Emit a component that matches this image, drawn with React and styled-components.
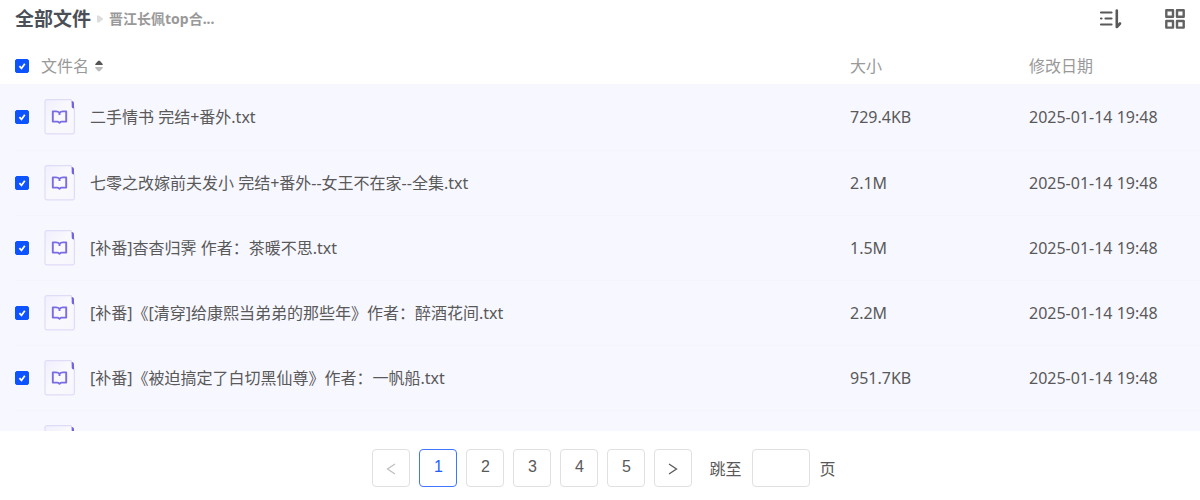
import React, { useState } from 'react';
import styled, { createGlobalStyle } from 'styled-components';

const initialFiles = [
  { id: 1, name: '二手情书 完结+番外.txt', size: '729.4KB', date: '2025-01-14 19:48' },
  { id: 2, name: '七零之改嫁前夫发小 完结+番外--女王不在家--全集.txt', size: '2.1M', date: '2025-01-14 19:48' },
  { id: 3, name: '[补番]杳杳归霁 作者：茶暖不思.txt', size: '1.5M', date: '2025-01-14 19:48' },
  { id: 4, name: '[补番]《[清穿]给康熙当弟弟的那些年》作者：醉酒花间.txt', size: '2.2M', date: '2025-01-14 19:48' },
  { id: 5, name: '[补番]《被迫搞定了白切黑仙尊》作者：一帆船.txt', size: '951.7KB', date: '2025-01-14 19:48' },
  { id: 6, name: '', size: '', date: '' },
];

const pages = [1, 2, 3, 4, 5];

const Checkbox = ({ label, checked, onChange }) => (
  <CheckboxLabel>
    <CheckboxInput type="checkbox" aria-label={label} checked={checked} onChange={onChange} />
    {checked && (
      <CheckMark viewBox="0 0 14 14" aria-hidden="true">
        <path d="M4.4 7.2 6.5 9.4 9.8 4.8" />
      </CheckMark>
    )}
  </CheckboxLabel>
);

const BookFileIcon = () => (
  <FileSvg viewBox="0 0 32 36" aria-hidden="true">
    <defs>
      <linearGradient id="filePaper" x1="0" y1="0" x2="1" y2="1">
        <stop offset="0" stopColor="#f0effe" />
        <stop offset="0.5" stopColor="#f9f9fd" />
        <stop offset="1" stopColor="#f7f6fc" />
      </linearGradient>
    </defs>
    <path d="M2.8.6H27l3.400 9v23.400a1.800 1.800 0 0 1-1.800 1.800H2.800A1.800 1.800 0 0 1 1 33V2.400A1.800 1.800 0 0 1 2.800.6Z" fill="url(#filePaper)" stroke="#dfdcf8" strokeWidth="1.200" />
    <path d="M27.700 2C29.300 2.200 30 3 30 4.500V9.500C28.500 9.500 27.700 8.800 27.700 7.500Z" fill="#7163e0" />
    <path d="M15.500 13.800C14.600 12.700 13.300 12.400 12 12.400H8.800v10.200h4.500c.9 0 1.500.5 2.200 1.200.7-.7 1.300-1.200 2.200-1.200h4.500V12.400H19c-1.300 0-2.600.3-3.500 1.400v2.200" fill="none" stroke="#7a6de4" strokeWidth="1.900" strokeLinejoin="round" />
  </FileSvg>
);

const App = () => {
  const [selected, setSelected] = useState(initialFiles.map((file) => file.id));
  const [page, setPage] = useState(1);
  const allSelected = selected.length === initialFiles.length;

  const toggleAll = () => setSelected(allSelected ? [] : initialFiles.map((file) => file.id));
  const toggleFile = (id) => {
    setSelected(selected.includes(id) ? selected.filter((item) => item !== id) : [...selected, id]);
  };

  return (
    <Page>
      <GlobalStyle />
      <TopBar>
        <Breadcrumb aria-label="路径">
          <RootLink href="#all">全部文件</RootLink>
          <CrumbArrow viewBox="0 0 6 8" aria-hidden="true"><path d="M0 0.500H2L6 3.500V4.500L2 7.500H0Z" /></CrumbArrow>
          <FolderLink href="#folder">晋江长佩top合...</FolderLink>
        </Breadcrumb>
        <Tools>
          <ToolButton type="button" aria-label="排序">
            <svg width="24" height="20" viewBox="0 0 24 20" fill="none" stroke="#595959" strokeWidth="2.200" strokeLinecap="round">
              <path d="M2 3.500H12.500M2 9.500H2.500M6.500 9.500H12.500M2 15.500H12.500" />
              <path d="M17.800 1.500V18L21 14.500" strokeWidth="2.600" strokeLinejoin="round" />
            </svg>
          </ToolButton>
          <ToolButton type="button" aria-label="网格视图">
            <svg width="20" height="20" viewBox="0 0 20 20" fill="none" stroke="#626262" strokeWidth="2.400" strokeLinejoin="round">
              <path d="M1.300 1.200h6.700v6.600H1.300zM12 1.200h6.700v6.600H12zM1.300 12h6.700v6.600H1.300zM12 12h6.700v6.600H12z" />
            </svg>
          </ToolButton>
        </Tools>
      </TopBar>

      <ListPane>
        <FileTable>
          <thead>
            <tr>
              <HeadCell $width="41px" $first>
                <Checkbox label="全选" checked={allSelected} onChange={toggleAll} />
              </HeadCell>
              <HeadCell>
                <SortButton type="button">
                  文件名
                  <svg width="8" height="12" viewBox="0 0 8 12" aria-hidden="true">
                    <path d="M0.300 5V4L3.200.8h1.600L7.700 4v1Z" fill="#555" />
                    <path d="M0.300 7v1l2.900 3.200h1.600L7.700 8V7Z" fill="#bbb" />
                  </svg>
                </SortButton>
              </HeadCell>
              <HeadCell $width="179px">大小</HeadCell>
              <HeadCell $width="171px">修改日期</HeadCell>
            </tr>
          </thead>
          <tbody>
            {initialFiles.map((file) => (
              <FileRow key={file.id}>
                <Cell $first>
                  <Checkbox
                    label={`选择 ${file.name}`}
                    checked={selected.includes(file.id)}
                    onChange={() => toggleFile(file.id)}
                  />
                </Cell>
                <Cell>
                  <FileName>
                    <BookFileIcon />
                    <span>{file.name}</span>
                  </FileName>
                </Cell>
                <Cell>{file.size}</Cell>
                <Cell>{file.date}</Cell>
              </FileRow>
            ))}
          </tbody>
        </FileTable>
      </ListPane>

      <Pagination aria-label="分页">
        <PageButtons>
          <PageButton type="button" aria-label="上一页" disabled={page === 1} onClick={() => setPage(page - 1)}>
            <Chevron viewBox="0 0 10 12"><path d="M9 1 1.500 6 9 11" /></Chevron>
          </PageButton>
          {pages.map((number) => (
            <PageButton type="button" key={number} $active={number === page} onClick={() => setPage(number)}>
              {number}
            </PageButton>
          ))}
          <PageButton type="button" aria-label="下一页" disabled={page === 5} onClick={() => setPage(page + 1)}>
            <Chevron viewBox="0 0 10 12"><path d="M1 1 8.500 6 1 11" /></Chevron>
          </PageButton>
        </PageButtons>
        <JumpLabel>
          <span>跳至</span>
          <JumpInput type="text" />
          <span>页</span>
        </JumpLabel>
      </Pagination>
    </Page>
  );
};

const GlobalStyle = createGlobalStyle`
  * {
    box-sizing: border-box;
  }

  body {
    margin: 0;
    background: #fff;
    color: #595959;
    font-family: 'Noto Sans', 'Noto Sans CJK SC', sans-serif;
    font-size: 16px;
    line-height: 24px;
  }

  button,
  input {
    font: inherit;
    color: inherit;
  }
`;

const Page = styled('div')`
  display: flex;
  flex-direction: column;
  height: 100vh;
`;

const TopBar = styled('header')`
  display: flex;
  align-items: center;
  justify-content: space-between;
  padding: 7px 15px 13px;
`;

const Breadcrumb = styled('nav')`
  display: flex;
  align-items: center;
  gap: 6px;
  font-weight: 700;

  a {
    text-decoration: none;
  }
`;

const RootLink = styled('a')`
  color: #4b4f57;
  font-size: 19px;
`;

const CrumbArrow = styled('svg')`
  width: 6px;
  height: 8px;
  fill: #ddd;
`;

const FolderLink = styled('a')`
  color: #999;
  font-size: 14px;
`;

const Tools = styled('div')`
  display: flex;
  gap: 42px;
`;

const ToolButton = styled('button')`
  display: flex;
  padding: 0;
  border: 0;
  background: none;
  cursor: pointer;
`;

const ListPane = styled('main')`
  flex: 1;
  min-height: 0;
  overflow-y: auto;
  scrollbar-width: none;
`;

const FileTable = styled('table')`
  width: 100%;
  border-spacing: 0;
  table-layout: fixed;
`;

const HeadCell = styled('th')`
  position: sticky;
  top: 0;
  z-index: 1;
  width: ${({ $width }) => $width || 'auto'};
  height: 40px;
  padding: 4px 0 0 ${({ $first }) => ($first ? '15px' : '0')};
  background: #fff;
  color: #999;
  font-weight: 400;
  text-align: left;
`;

const SortButton = styled('button')`
  display: flex;
  align-items: center;
  gap: 6px;
  padding: 0;
  border: 0;
  background: none;
  cursor: pointer;
`;

const Cell = styled('td')`
  height: 65px;
  padding: 0 0 0 ${({ $first }) => ($first ? '15px' : '0')};
`;

const FileRow = styled('tr')`
  background: #f7f7ff;

  &:first-child ${Cell} {
    height: 66px;
  }

  & + & ${Cell} {
    background: linear-gradient(#f4f4fa, #f4f4fa) 0 0 / 100% 1px no-repeat;
  }

  & + & ${Cell}:first-child {
    background-position: 15px 0;
  }
`;

const FileName = styled('div')`
  display: flex;
  align-items: center;
  gap: 14px;
  padding-left: 3px;
  white-space: nowrap;
`;

const FileSvg = styled('svg')`
  flex: none;
  width: 32px;
  height: 36px;
`;

const CheckboxLabel = styled('label')`
  display: grid;
  width: 14px;
  height: 14px;
`;

const CheckboxInput = styled('input')`
  grid-area: 1 / 1;
  appearance: none;
  width: 14px;
  height: 14px;
  margin: 0;
  border: 1px solid #c9ccd4;
  border-radius: 2px;
  background: #fff;
  cursor: pointer;

  &:checked {
    border-color: #0d53ff;
    background: #0d53ff;
  }
`;

const CheckMark = styled('svg')`
  grid-area: 1 / 1;
  z-index: 0;
  fill: none;
  stroke: #fff;
  stroke-width: 1.8;
  pointer-events: none;
`;

const Pagination = styled('nav')`
  display: flex;
  align-items: center;
  justify-content: center;
  gap: 17px;
  padding: 18px 0 13px 8px;
`;

const PageButtons = styled('div')`
  display: flex;
  gap: 9px;
`;

const PageButton = styled('button')`
  display: flex;
  align-items: center;
  justify-content: center;
  width: 38px;
  height: 38px;
  padding: 0 0 2px;
  border: 1px solid ${({ $active }) => ($active ? '#3f76ff' : '#e0e0e0')};
  border-radius: 4px;
  background: #fff;
  color: ${({ $active }) => ($active ? '#1f5eff' : '#595959')};
  font-family: 'Liberation Sans', sans-serif;
  cursor: pointer;

  &:disabled {
    color: #bfbfbf;
    cursor: not-allowed;
  }
`;

const Chevron = styled('svg')`
  width: 10px;
  height: 12px;
  margin-top: 4px;
  fill: none;
  stroke: currentColor;
  stroke-width: 1.3;
`;

const JumpLabel = styled('label')`
  display: flex;
  align-items: center;
  gap: 10px;

  span {
    padding-top: 2px;
  }
`;

const JumpInput = styled('input')`
  width: 58px;
  height: 38px;
  padding: 0 8px;
  border: 1px solid #e0e0e0;
  border-radius: 4px;
  background: #fff;
`;

export default App;
